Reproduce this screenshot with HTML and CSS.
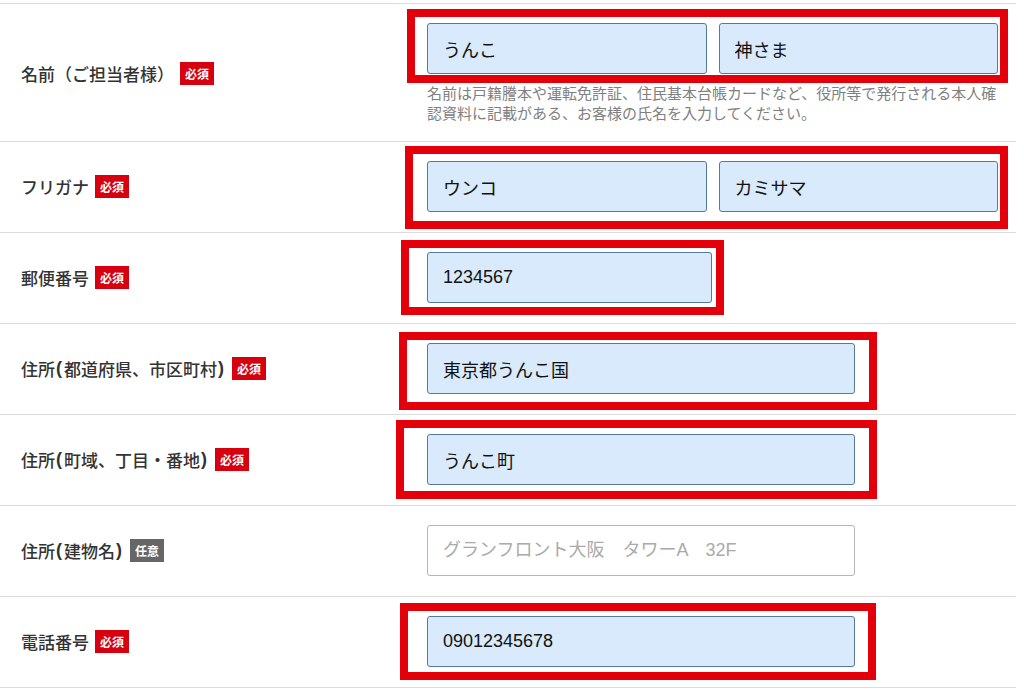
FILE: index.html
```html
<!DOCTYPE html>
<html lang="ja">
<head>
  <meta charset="UTF-8">
  <meta name="viewport" content="width=device-width, initial-scale=1.0">
  <title>お客様情報入力</title>
  <link rel="stylesheet" href="styles.css">
</head>
<body>
  <div class="form">
    <div class="row">
      <div class="label">名前（ご担当者様）<span class="badge">必須</span></div>
      <div class="field">
        <div class="inputs">
          <input class="input" type="text" value="うんこ">
          <input class="input" type="text" value="神さま">
          <span class="mark mark-name"></span>
        </div>
        <p class="help">名前は戸籍謄本や運転免許証、住民基本台帳カードなど、役所等で発行される本人確認資料に記載がある、お客様の氏名を入力してください。</p>
      </div>
    </div>
    <div class="row">
      <div class="label">フリガナ<span class="badge">必須</span></div>
      <div class="field">
        <div class="inputs">
          <input class="input" type="text" value="ウンコ">
          <input class="input" type="text" value="カミサマ">
          <span class="mark mark-kana"></span>
        </div>
      </div>
    </div>
    <div class="row">
      <div class="label">郵便番号<span class="badge">必須</span></div>
      <div class="field">
        <div class="inputs zip">
          <input class="input" type="text" value="1234567">
          <span class="mark mark-zip"></span>
        </div>
      </div>
    </div>
    <div class="row">
      <div class="label">住所<b class="paren">(</b>都道府県、市区町村<b class="paren">)</b><span class="badge">必須</span></div>
      <div class="field">
        <div class="inputs wide">
          <input class="input" type="text" value="東京都うんこ国">
          <span class="mark mark-pref"></span>
        </div>
      </div>
    </div>
    <div class="row">
      <div class="label">住所<b class="paren">(</b>町域、丁目・番地<b class="paren">)</b><span class="badge">必須</span></div>
      <div class="field">
        <div class="inputs wide">
          <input class="input" type="text" value="うんこ町">
          <span class="mark mark-town"></span>
        </div>
      </div>
    </div>
    <div class="row">
      <div class="label">住所<b class="paren">(</b>建物名<b class="paren">)</b><span class="badge optional">任意</span></div>
      <div class="field">
        <div class="inputs wide">
          <input class="input empty" type="text" placeholder="グランフロント大阪　タワーA　32F">
        </div>
      </div>
    </div>
    <div class="row">
      <div class="label">電話番号<span class="badge">必須</span></div>
      <div class="field">
        <div class="inputs wide">
          <input class="input" type="text" value="09012345678">
          <span class="mark mark-tel"></span>
        </div>
      </div>
    </div>
  </div>
</body>
</html>
```

FILE: styles.css
```css
body {
  margin: 0;
  background: #fff;
  font-family: "Noto Sans CJK JP", "Liberation Sans", sans-serif;
  color: #333;
}

.form {
  width: 1016px;
  margin-top: 3px;
  border-bottom: 1px solid #dcdcdc;
}

.row {
  display: grid;
  grid-template-columns: 427px 571px;
  border-top: 1px solid #dcdcdc;
  padding: 19px 18px 20px 0;
}
.row:first-child {
  padding-bottom: 18px;
}

.label {
  display: flex;
  align-items: center;
  padding-left: 21px;
  font-size: 17px;
  font-weight: 500;
  color: #333;
}
.paren {
  font-family: "Liberation Sans", sans-serif;
  font-size: 18px;
  margin: 0 2px 0 1px;
}

.badge {
  display: inline-flex;
  align-items: center;
  justify-content: center;
  width: 34px;
  height: 23px;
  margin-left: 6px;
  background-color: #d7000f;
  color: #fff;
  font-size: 12px;
  font-weight: bold;
}
.badge.optional {
  background-color: #666;
}

.inputs {
  position: relative;
  display: flex;
  gap: 12px;
}
.inputs.zip {
  width: 285px;
}
.inputs.wide {
  width: 428px;
}

.input {
  flex: 1;
  min-width: 0;
  height: 51px;
  box-sizing: border-box;
  padding: 0 15px;
  border: 1px solid #56799a;
  border-radius: 3px;
  background-color: #d8eafb;
  font-family: "Liberation Sans", "Noto Sans CJK JP", sans-serif;
  font-size: 18px;
  color: #111;
}
.input.empty {
  background-color: #fff;
  border-color: #b5b5b5;
}
.input::placeholder {
  color: #aaa;
}

.help {
  margin: 9px 0 0;
  font-size: 15px;
  line-height: 20px;
  color: #808080;
}

/* red annotation boxes drawn over the filled fields */
.mark {
  position: absolute;
  border: 8px solid #e4000b;
  pointer-events: none;
}
.mark-name {
  top: -14px;
  left: -20px;
  right: -10px;
  bottom: -9px;
}
.mark-kana {
  top: -15px;
  left: -22px;
  right: -10px;
  bottom: -17px;
}
.mark-zip {
  top: -12px;
  left: -26px;
  right: -12px;
  bottom: -12px;
}
.mark-pref {
  top: -11px;
  left: -28px;
  right: -22px;
  bottom: -16px;
}
.mark-town {
  top: -14px;
  left: -31px;
  right: -22px;
  bottom: -14px;
}
.mark-tel {
  top: -13px;
  left: -27px;
  right: -21px;
  bottom: -13px;
}
```
